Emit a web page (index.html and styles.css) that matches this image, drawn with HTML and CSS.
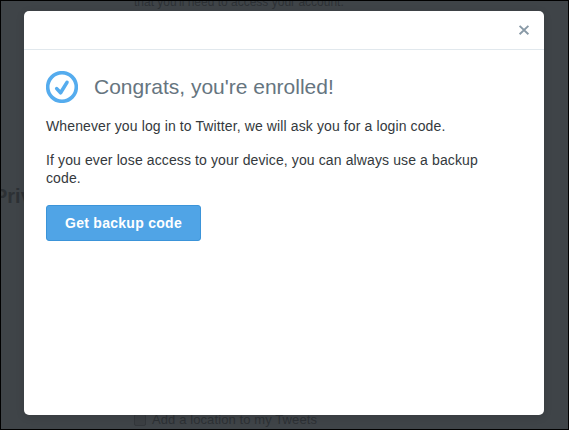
FILE: index.html
```
<!DOCTYPE html>
<html lang="en">
<head>
<meta charset="utf-8">
<title>Login verification</title>
<link rel="stylesheet" href="styles.css">
</head>
<body>
<div class="backdrop">
  <p class="behind behind-hint">that you'll need to access your account.</p>
  <h2 class="behind behind-heading">Privacy</h2>
  <p class="behind behind-option"><span class="checkbox"></span>Add a location to my Tweets</p>
</div>
<main class="dialog">
  <header class="dialog-header">
    <button class="close" aria-label="Close">
      <svg width="12" height="12" viewBox="0 0 12 12"><path d="M1.6 1.9 10.4 10.3M10.4 1.9 1.6 10.3"/></svg>
    </button>
  </header>
  <section class="dialog-body">
    <div class="title-row">
      <svg class="check" width="32" height="32" viewBox="0 0 32 32"><circle cx="16" cy="16" r="14.3"/><path d="M10.7 17.6 14.6 21.8 21 11.4"/></svg>
      <h1>Congrats, you're enrolled!</h1>
    </div>
    <p>Whenever you log in to Twitter, we will ask you for a login code.</p>
    <p>If you ever lose access to your device, you can always use a backup code.</p>
    <button class="primary">Get backup code</button>
  </section>
</main>
</body>
</html>
```
FILE: styles.css
```
* { box-sizing: border-box; }
body {
  margin: 0;
  width: 569px;
  height: 430px;
  overflow: hidden;
  background: #3f4448;
  font-family: "Liberation Sans", Arial, sans-serif;
  position: relative;
}
.backdrop {
  position: absolute;
  inset: 0;
  border: 1px solid #000;
  overflow: hidden;
}
.behind {
  position: absolute;
  margin: 0;
  white-space: nowrap;
  color: #2d3135;
}
.behind-hint { left: 133px; top: -7px; font-size: 12px; line-height: 16px; }
.behind-heading { left: -7px; top: 183px; font-size: 20px; line-height: 24px; }
.behind-option {
  left: 133px;
  top: 411px;
  display: flex;
  align-items: center;
  gap: 6px;
  font-size: 13px;
  line-height: 16px;
  letter-spacing: 0.1px;
}
.checkbox {
  width: 12px;
  height: 12px;
  border: 1px solid #33373b;
  border-radius: 2px;
  background: #3b3f43;
}
.dialog {
  position: relative;
  width: 520px;
  height: 404px;
  margin: 11px 0 0 24px;
  background: #fff;
  border-radius: 5px;
  box-shadow: 0 2px 8px rgba(0, 0, 0, 0.12);
}
.dialog-header {
  display: flex;
  justify-content: flex-end;
  align-items: center;
  height: 39px;
  padding-right: 14px;
  border-bottom: 1px solid #e1e8ed;
}
button {
  font-family: inherit;
  border: 0;
}
.close {
  display: flex;
  padding: 0;
  background: none;
}
.close path { stroke: #8899a6; stroke-width: 1.9; fill: none; }
.dialog-body { padding: 21px 22px; }
.title-row {
  display: flex;
  align-items: center;
  gap: 16px;
  height: 32px;
  margin-bottom: 14px;
}
.check { fill: none; stroke: #55acee; stroke-width: 3.6; }
.check path { stroke-linecap: round; stroke-linejoin: round; }
h1 {
  margin: 0;
  color: #66757f;
  font-size: 21px;
  font-weight: 400;
  line-height: 28px;
}
.dialog-body p {
  width: 450px;
  margin: 0 0 16px;
  color: #34393d;
  font-size: 14px;
  line-height: 18px;
  letter-spacing: 0.115px;
}
.primary {
  display: block;
  width: 155px;
  height: 36px;
  margin-top: 18px;
  padding: 0;
  border: 1px solid #3b94d9;
  border-radius: 3px;
  background: #50a4e6;
  color: #fff;
  font-size: 14px;
  font-weight: 700;
  line-height: 20px;
  letter-spacing: 0.28px;
}
```
